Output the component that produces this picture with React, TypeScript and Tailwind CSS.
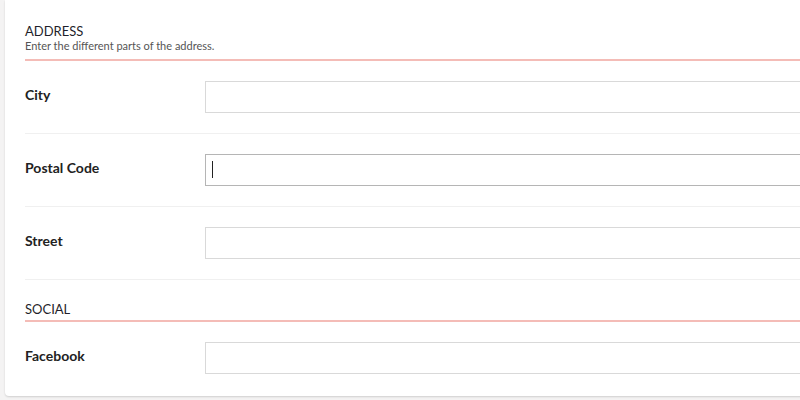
import React from "react";

type Field = { label: string; focused?: boolean };

const address: Field[] = [
  { label: "City" },
  { label: "Postal Code", focused: true },
  { label: "Street" },
];

function Row({ field, last }: { field: Field; last?: boolean }) {
  return (
    <div className={"flex items-center py-[20px] " + (last ? "" : "border-b border-[#f0f0f0]")}>
      <label className="mb-[5px] w-[180px] shrink-0 text-[14px] font-bold leading-[20px] text-[#222]">
        {field.label}
      </label>
      <div className="relative flex-1">
        <input
          type="text"
          className={
            "block h-[32px] w-full bg-white px-2 outline-none border " +
            (field.focused ? "border-[#b5b5b5]" : "border-[#d9d9d9]")
          }
        />
        {field.focused && <span className="absolute left-[7px] top-[7px] h-[17px] w-px bg-[#222]" />}
      </div>
    </div>
  );
}

export default function App() {
  return (
    <div
      className="h-[400px] w-[800px] overflow-hidden bg-[#f4f3f3] pl-[5px]"
      style={{ fontFamily: "Lato, 'Open Sans', sans-serif" }}
    >
      <div className="h-[396px] w-[900px] rounded-bl-[4px] bg-white px-[20px] pt-[2px] shadow-[0_1px_2px_rgba(0,0,0,0.15)]">
        {/* Address */}
        <div className="pt-[21px] pb-[6px] border-b-2 border-[#f4bcb7]">
          <p className="text-[13px] leading-[16px] text-[#1f1f2b]">ADDRESS</p>
          <p className="text-[11px] leading-[14px] text-[#555]">Enter the different parts of the address.</p>
        </div>
        {address.map((f) => (
          <Row key={f.label} field={f} />
        ))}

        {/* Social */}
        <div className="pt-[21px] pb-[3px] border-b-2 border-[#f4bcb7]">
          <p className="text-[13px] leading-[16px] text-[#1f1f2b]">SOCIAL</p>
        </div>
        <Row field={{ label: "Facebook" }} last />
      </div>
    </div>
  );
}
